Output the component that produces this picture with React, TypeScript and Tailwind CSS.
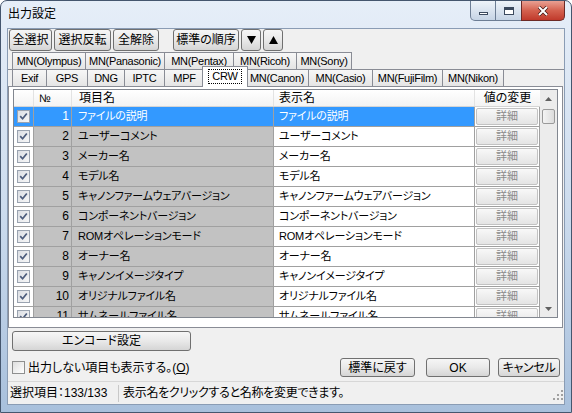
import React from "react";

const rows = [
  "ファイルの説明",
  "ユーザーコメント",
  "メーカー名",
  "モデル名",
  "キャノンファームウェアバージョン",
  "コンポーネントバージョン",
  "ROMオペレーションモード",
  "オーナー名",
  "キャノンイメージタイプ",
  "オリジナルファイル名",
  "サムネールファイル名",
];

const tabsTop = [
  { label: "MN(Olympus)", w: "w-[74px]" },
  { label: "MN(Panasonic)", w: "w-[80px]" },
  { label: "MN(Pentax)", w: "w-[70px]" },
  { label: "MN(Ricoh)", w: "w-[64px]" },
  { label: "MN(Sony)", w: "w-[56px]" },
];

const tabsBottom = [
  { label: "Exif", w: "w-[35px]" },
  { label: "GPS", w: "w-[42px]" },
  { label: "DNG", w: "w-[38px]" },
  { label: "IPTC", w: "w-[41px]" },
  { label: "MPF", w: "w-[41px]" },
  { label: "CRW", w: "w-[46px]", active: true },
  { label: "MN(Canon)", w: "w-[64px]" },
  { label: "MN(Casio)", w: "w-[65px]" },
  { label: "MN(FujiFilm)", w: "w-[71px]" },
  { label: "MN(Nikon)", w: "w-[62px]" },
];

const btn =
  "flex items-center justify-center rounded-[3px] border border-[#707070] bg-gradient-to-b from-[#f6f6f6] via-[#e9e9e9] to-[#d5d5d5] text-[12px] leading-none";

function GridCheck() {
  return (
    <span className="flex h-[13px] w-[13px] items-center justify-center border border-[#9aa3b0] bg-gradient-to-br from-[#dcdfe4] to-[#f7f7f7]">
      <svg width="9" height="9" viewBox="0 0 9 9">
        <path d="M1.2 4.2 L3.6 6.8 L7.8 1.4" stroke="#4c5c7c" strokeWidth="1.7" fill="none" />
      </svg>
    </span>
  );
}

function Tab({ label, w, active }: { label: string; w: string; active?: boolean }) {
  if (active) {
    return (
      <div
        className={`${w} relative z-10 -ml-[3px] -mr-[2px] flex h-[21px] items-start justify-center border border-b-0 border-[#898c95] bg-white pt-[2px] text-[11px] tracking-[-0.2px]`}
      >
        <span className="border border-dotted border-black px-[3px] leading-[13px]">{label}</span>
      </div>
    );
  }
  return (
    <div
      className={`${w} -ml-px flex h-full items-center justify-center whitespace-nowrap border border-b-0 border-[#898c95] bg-gradient-to-b from-[#f7f7f7] to-[#e4e4e4] text-[11px] tracking-[-0.3px] first:ml-0`}
    >
      {label}
    </div>
  );
}

export default function App() {
  return (
    <div className="h-[413px] w-[572px] overflow-hidden bg-white">
      <div className="flex h-[413px] w-[572px] flex-col rounded-t-[7px] border border-[#45566e] bg-gradient-to-b from-[#e6eef8] via-[#cddcee] to-[#a8c0dc] font-['Liberation_Sans','Noto_Sans_CJK_JP',sans-serif] text-black [font-feature-settings:'palt']">
        {/* title bar */}
        <div className="flex h-[27px] shrink-0 items-start justify-between">
          <div className="pl-[7px] pt-[6px] text-[12px] leading-[14px]">出力設定</div>
          <div className="mr-[6px] flex h-[20px]">
            <div className="flex w-[26px] items-end justify-center rounded-bl-[5px] border border-t-0 border-[#6c7d94] bg-gradient-to-b from-[#eef3f9] to-[#c6d4e5] pb-[5px]">
              <span className="h-[3px] w-[9px] border border-[#3c4a5e] bg-white" />
            </div>
            <div className="-ml-px flex w-[27px] items-center justify-center border border-t-0 border-[#6c7d94] bg-gradient-to-b from-[#eef3f9] to-[#c6d4e5]">
              <span className="h-[8px] w-[10px] border border-t-[3px] border-[#3c4a5e] bg-white" />
            </div>
            <div className="-ml-px flex w-[44px] items-center justify-center rounded-br-[5px] border border-t-0 border-[#6b2a26] bg-gradient-to-b from-[#e8a093] via-[#d4614f] to-[#c0392b]">
              <svg width="12" height="10" viewBox="0 0 12 10">
                <path d="M2 1 L10 9 M10 1 L2 9" stroke="#3b1512" strokeWidth="3.4" />
                <path d="M2 1 L10 9 M10 1 L2 9" stroke="#ffffff" strokeWidth="2" />
              </svg>
            </div>
          </div>
        </div>

        {/* client area */}
        <div className="mx-[6px] flex h-[377px] shrink-0 flex-col border border-[#8a9cb4] bg-[#f0f0f0]">
          {/* toolbar */}
          <div className="flex h-[22px] pl-px">
            <div className={`${btn} w-[43px]`}>全選択</div>
            <div className={`${btn} ml-[2px] w-[57px]`}>選択反転</div>
            <div className={`${btn} ml-[2px] w-[46px]`}>全解除</div>
            <div className={`${btn} ml-[14px] w-[66px]`}>標準の順序</div>
            <div className={`${btn} ml-[2px] w-[20px]`}>
              <svg width="9" height="8" viewBox="0 0 9 8"><path d="M0 0 H9 L4.5 8 Z" fill="#000" /></svg>
            </div>
            <div className={`${btn} ml-[2px] w-[20px]`}>
              <svg width="9" height="8" viewBox="0 0 9 8"><path d="M0 8 H9 L4.5 0 Z" fill="#000" /></svg>
            </div>
          </div>

          {/* tabs */}
          <div className="mt-px flex h-[17px] pl-[4px]">
            {tabsTop.map((t) => (
              <Tab key={t.label} label={t.label} w={t.w} />
            ))}
          </div>
          <div className="flex h-[18px] items-end border-t border-[#898c95] pl-[4px] [&>div]:h-[18px] [&>div:nth-child(6)]:h-[21px]">
            {tabsBottom.map((t) => (
              <Tab key={t.label} label={t.label} w={t.w} active={t.active} />
            ))}
          </div>

          {/* tab panel */}
          <div className="-mt-px h-[242px] w-[555px] shrink-0 border border-[#898c95] bg-white">
            <div className="ml-[4px] mt-[2px] flex h-[229px] w-[545px] overflow-hidden border border-[#828790] text-[11px]">
              <div className="w-[526px]">
                {/* header */}
                <div className="flex h-[17px] items-center border-b border-[#d5d5d5] bg-gradient-to-b from-white to-[#f3f3f3] text-[12px]">
                  <div className="h-full w-[20px] border-r border-[#e3e3e3]" />
                  <div className="h-full w-[38px] border-r border-[#e3e3e3] pl-[5px] text-[11px] leading-[17px]">№</div>
                  <div className="h-full w-[202px] border-r border-[#e3e3e3] pl-[7px] leading-[17px]">項目名</div>
                  <div className="h-full w-[201px] border-r border-[#e3e3e3] pl-[5px] leading-[17px]">表示名</div>
                  <div className="h-full w-[65px] text-center leading-[17px]">値の変更</div>
                </div>
                {rows.map((r, i) => {
                  const sel = i === 0;
                  return (
                    <div key={r} className="flex h-[20px]">
                      <div
                        className={`flex w-[20px] items-center justify-center border-b border-r border-[#a0a0a0] ${
                          sel ? "bg-[#3399ff]" : "bg-white"
                        }`}
                      >
                        <GridCheck />
                      </div>
                      <div
                        className={`w-[38px] border-b border-r border-[#a0a0a0] pr-[2px] text-right text-[12px] leading-[19px] ${
                          sel ? "bg-[#3399ff] text-white" : "bg-[#c2c2c2]"
                        }`}
                      >
                        {i + 1}
                      </div>
                      <div
                        className={`w-[202px] border-b border-r border-[#a0a0a0] pl-[6px] leading-[19px] tracking-[-0.2px] ${
                          sel ? "bg-[#3399ff] text-white" : "bg-[#c2c2c2]"
                        }`}
                      >
                        {r}
                      </div>
                      <div
                        className={`w-[201px] border-b border-r border-[#a0a0a0] pl-[5px] leading-[19px] tracking-[-0.2px] ${
                          sel ? "bg-[#3399ff] text-white" : "bg-white"
                        }`}
                      >
                        {r}
                      </div>
                      <div className="w-[65px] border-b border-r border-[#a0a0a0] bg-white px-px pt-px">
                        <div className="flex h-[17px] items-center justify-center rounded-[2px] border border-[#c2c2c2] bg-gradient-to-b from-[#f8f8f8] to-[#e4e4e4] text-[11px] text-[#8a8a8a]">
                          詳細
                        </div>
                      </div>
                    </div>
                  );
                })}
              </div>
              {/* scrollbar */}
              <div className="flex w-[17px] flex-col bg-[#ececec]">
                <div className="flex h-[17px] items-center justify-center">
                  <svg width="7" height="4" viewBox="0 0 7 4"><path d="M0 4 H7 L3.5 0 Z" fill="#606060" /></svg>
                </div>
                <div className="mx-[2px] mt-[2px] h-[15px] rounded-[2px] border border-[#9a9a9a] bg-gradient-to-r from-[#f4f4f4] to-[#dcdcdc]" />
                <div className="flex-1" />
                <div className="flex h-[17px] items-center justify-center">
                  <svg width="7" height="4" viewBox="0 0 7 4"><path d="M0 0 H7 L3.5 4 Z" fill="#606060" /></svg>
                </div>
              </div>
            </div>
          </div>

          {/* encode button */}
          <div className={`${btn} ml-[4px] mt-[3px] h-[20px] w-[179px] shrink-0`}>エンコード設定</div>

          {/* option row */}
          <div className="mt-[7px] flex h-[19px] shrink-0 items-center justify-between pl-[4px] pr-[4px]">
            <div className="flex items-center text-[12px]">
              <span className="h-[13px] w-[13px] border border-[#8e8f8f] bg-gradient-to-br from-[#dedede] to-white" />
              <span className="ml-[3px]">
                出力しない項目も表示する。(<span className="underline">O</span>)
              </span>
            </div>
            <div className="flex h-full">
              <div className={`${btn} w-[75px]`}>標準に戻す</div>
              <div className={`${btn} ml-[11px] w-[64px]`}>OK</div>
              <div className={`${btn} ml-[8px] w-[62px] tracking-[-0.3px]`}>キャンセル</div>
            </div>
          </div>

          {/* status bar */}
          <div className="mt-[4px] flex h-[23px] shrink-0 items-center border-t border-[#d7d7d7] text-[12px]">
            <div className="w-[110px] pl-[2px]">選択項目：133/133</div>
            <div className="h-[17px] w-px bg-[#c8c8c8]" />
            <div className="flex-1 pl-[4px] tracking-[-0.3px]">表示名をクリックすると名称を変更できます。</div>
            <div className="mr-[1px] mt-[8px] self-start">
              <svg width="10" height="10" viewBox="0 0 10 10" fill="#a0a0a0">
                <rect x="8" y="0" width="2" height="2" />
                <rect x="4" y="4" width="2" height="2" />
                <rect x="8" y="4" width="2" height="2" />
                <rect x="0" y="8" width="2" height="2" />
                <rect x="4" y="8" width="2" height="2" />
                <rect x="8" y="8" width="2" height="2" />
              </svg>
            </div>
          </div>
        </div>
      </div>
    </div>
  );
}
